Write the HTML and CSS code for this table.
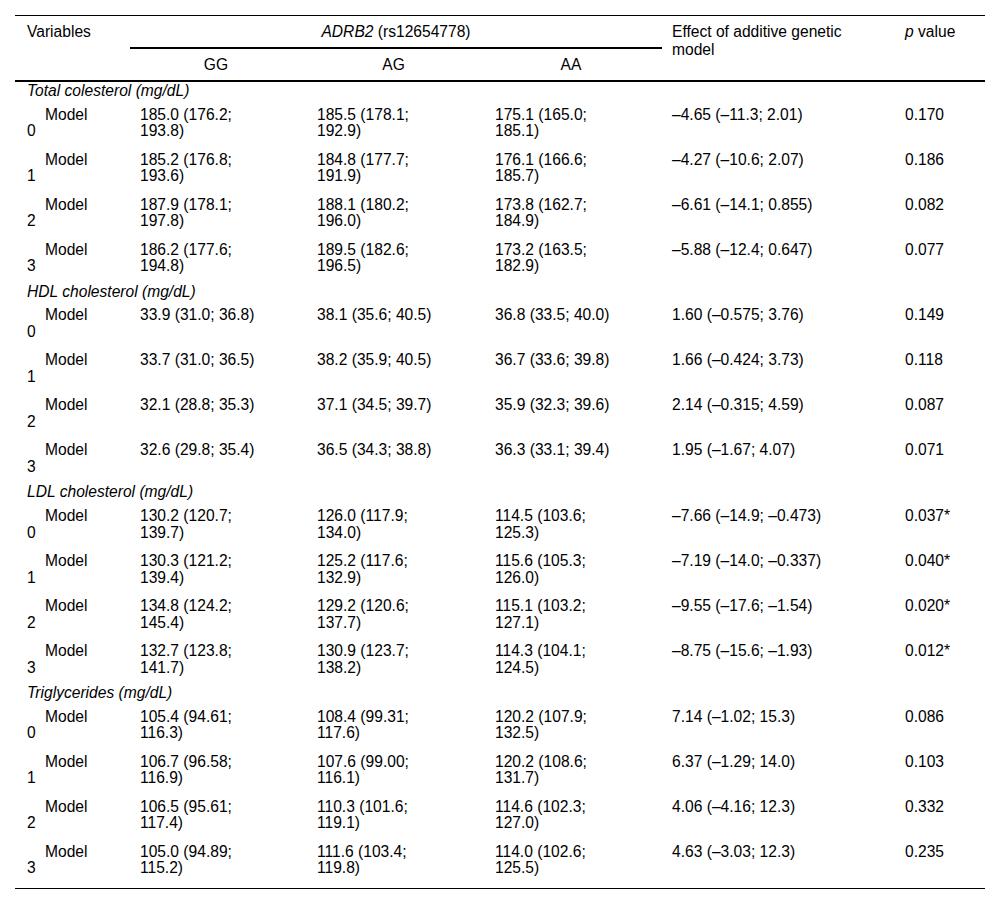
FILE: index.html
```html
<!DOCTYPE html>
<html lang="en">
<head>
<meta charset="utf-8">
<title>ADRB2 table</title>
<link rel="stylesheet" href="styles.css">
</head>
<body>
<table class="data">
  <colgroup>
    <col class="c1"><col class="c2"><col class="c3"><col class="c4"><col class="c5"><col class="c6">
  </colgroup>
  <thead>
    <tr>
      <th class="hv" rowspan="2">Variables</th>
      <th class="hg" colspan="3"><i>ADRB2</i> (rs12654778)</th>
      <th class="he" rowspan="2">Effect of additive genetic model</th>
      <th class="hp" rowspan="2"><i>p</i> value</th>
    </tr>
    <tr>
      <th class="hs">GG</th>
      <th class="hs">AG</th>
      <th class="hs">AA</th>
    </tr>
  </thead>
  <tbody>
    <tr class="grp"><td colspan="6">Total colesterol (mg/dL)</td></tr>
    <tr class="m"><td class="lab">Model 0</td><td>185.0 (176.2; 193.8)</td><td>185.5 (178.1; 192.9)</td><td>175.1 (165.0; 185.1)</td><td>–4.65 (–11.3; 2.01)</td><td>0.170</td></tr>
    <tr class="m"><td class="lab">Model 1</td><td>185.2 (176.8; 193.6)</td><td>184.8 (177.7; 191.9)</td><td>176.1 (166.6; 185.7)</td><td>–4.27 (–10.6; 2.07)</td><td>0.186</td></tr>
    <tr class="m"><td class="lab">Model 2</td><td>187.9 (178.1; 197.8)</td><td>188.1 (180.2; 196.0)</td><td>173.8 (162.7; 184.9)</td><td>–6.61 (–14.1; 0.855)</td><td>0.082</td></tr>
    <tr class="m"><td class="lab">Model 3</td><td>186.2 (177.6; 194.8)</td><td>189.5 (182.6; 196.5)</td><td>173.2 (163.5; 182.9)</td><td>–5.88 (–12.4; 0.647)</td><td>0.077</td></tr>
    <tr class="grp"><td colspan="6">HDL cholesterol (mg/dL)</td></tr>
    <tr class="m"><td class="lab">Model 0</td><td>33.9 (31.0; 36.8)</td><td>38.1 (35.6; 40.5)</td><td>36.8 (33.5; 40.0)</td><td>1.60 (–0.575; 3.76)</td><td>0.149</td></tr>
    <tr class="m"><td class="lab">Model 1</td><td>33.7 (31.0; 36.5)</td><td>38.2 (35.9; 40.5)</td><td>36.7 (33.6; 39.8)</td><td>1.66 (–0.424; 3.73)</td><td>0.118</td></tr>
    <tr class="m"><td class="lab">Model 2</td><td>32.1 (28.8; 35.3)</td><td>37.1 (34.5; 39.7)</td><td>35.9 (32.3; 39.6)</td><td>2.14 (–0.315; 4.59)</td><td>0.087</td></tr>
    <tr class="m"><td class="lab">Model 3</td><td>32.6 (29.8; 35.4)</td><td>36.5 (34.3; 38.8)</td><td>36.3 (33.1; 39.4)</td><td>1.95 (–1.67; 4.07)</td><td>0.071</td></tr>
    <tr class="grp"><td colspan="6">LDL cholesterol (mg/dL)</td></tr>
    <tr class="m"><td class="lab">Model 0</td><td>130.2 (120.7; 139.7)</td><td>126.0 (117.9; 134.0)</td><td>114.5 (103.6; 125.3)</td><td>–7.66 (–14.9; –0.473)</td><td>0.037*</td></tr>
    <tr class="m"><td class="lab">Model 1</td><td>130.3 (121.2; 139.4)</td><td>125.2 (117.6; 132.9)</td><td>115.6 (105.3; 126.0)</td><td>–7.19 (–14.0; –0.337)</td><td>0.040*</td></tr>
    <tr class="m"><td class="lab">Model 2</td><td>134.8 (124.2; 145.4)</td><td>129.2 (120.6; 137.7)</td><td>115.1 (103.2; 127.1)</td><td>–9.55 (–17.6; –1.54)</td><td>0.020*</td></tr>
    <tr class="m"><td class="lab">Model 3</td><td>132.7 (123.8; 141.7)</td><td>130.9 (123.7; 138.2)</td><td>114.3 (104.1; 124.5)</td><td>–8.75 (–15.6; –1.93)</td><td>0.012*</td></tr>
    <tr class="grp"><td colspan="6">Triglycerides (mg/dL)</td></tr>
    <tr class="m"><td class="lab">Model 0</td><td>105.4 (94.61; 116.3)</td><td>108.4 (99.31; 117.6)</td><td>120.2 (107.9; 132.5)</td><td>7.14 (–1.02; 15.3)</td><td>0.086</td></tr>
    <tr class="m"><td class="lab">Model 1</td><td>106.7 (96.58; 116.9)</td><td>107.6 (99.00; 116.1)</td><td>120.2 (108.6; 131.7)</td><td>6.37 (–1.29; 14.0)</td><td>0.103</td></tr>
    <tr class="m"><td class="lab">Model 2</td><td>106.5 (95.61; 117.4)</td><td>110.3 (101.6; 119.1)</td><td>114.6 (102.3; 127.0)</td><td>4.06 (–4.16; 12.3)</td><td>0.332</td></tr>
    <tr class="m last"><td class="lab">Model 3</td><td>105.0 (94.89; 115.2)</td><td>111.6 (103.4; 119.8)</td><td>114.0 (102.6; 125.5)</td><td>4.63 (–3.03; 12.3)</td><td>0.235</td></tr>
  </tbody>
</table>
</body>
</html>
```

FILE: styles.css
```css
html, body {
  margin: 0;
  padding: 0;
  background: #fff;
}

body {
  padding: 15px 15px 0 15px;
  font-family: "Liberation Sans", Arial, Helvetica, sans-serif;
  font-size: 15.6px;
  color: #000;
}

.data {
  width: 970px;
  table-layout: fixed;
  border-collapse: separate;
  border-spacing: 0;
  border-top: 1px solid #000;
  border-bottom: 1px solid #000;
}

.c1 { width: 115px; }
.c2 { width: 177px; }
.c3 { width: 178px; }
.c4 { width: 177px; }
.c5 { width: 233px; }
.c6 { width: 90px; }

th {
  font-weight: normal;
  line-height: 18.3px;
  padding: 6.5px 10px 6.3px 10px;
  vertical-align: top;
  text-align: left;
}

.hv {
  padding-left: 12px;
  padding-right: 35px;
  border-bottom: 2px solid #000;
}

.hg {
  text-align: center;
  border-bottom: 2px solid #000;
  padding-bottom: 6.5px;
}

.he {
  padding-right: 31px;
  border-bottom: 2px solid #000;
}

.hp {
  border-bottom: 2px solid #000;
}

.hs {
  text-align: center;
  padding: 6.7px 15px 6.2px 10px;
  border-bottom: 2px solid #000;
}

td {
  line-height: 16.7px;
  vertical-align: top;
  text-align: left;
  padding: 3.5px 37px 8.1px 10px;
}

.grp td {
  font-style: italic;
  padding: 0.4px 12px 3.6px 12px;
}

.lab {
  padding-left: 12px;
  padding-right: 35px;
  text-indent: 18px;
}

.m td:nth-child(5) {
  padding-right: 31px;
}

.m td:nth-child(6) {
  padding-right: 8px;
}

.last td {
  padding-bottom: 11px;
}
```
